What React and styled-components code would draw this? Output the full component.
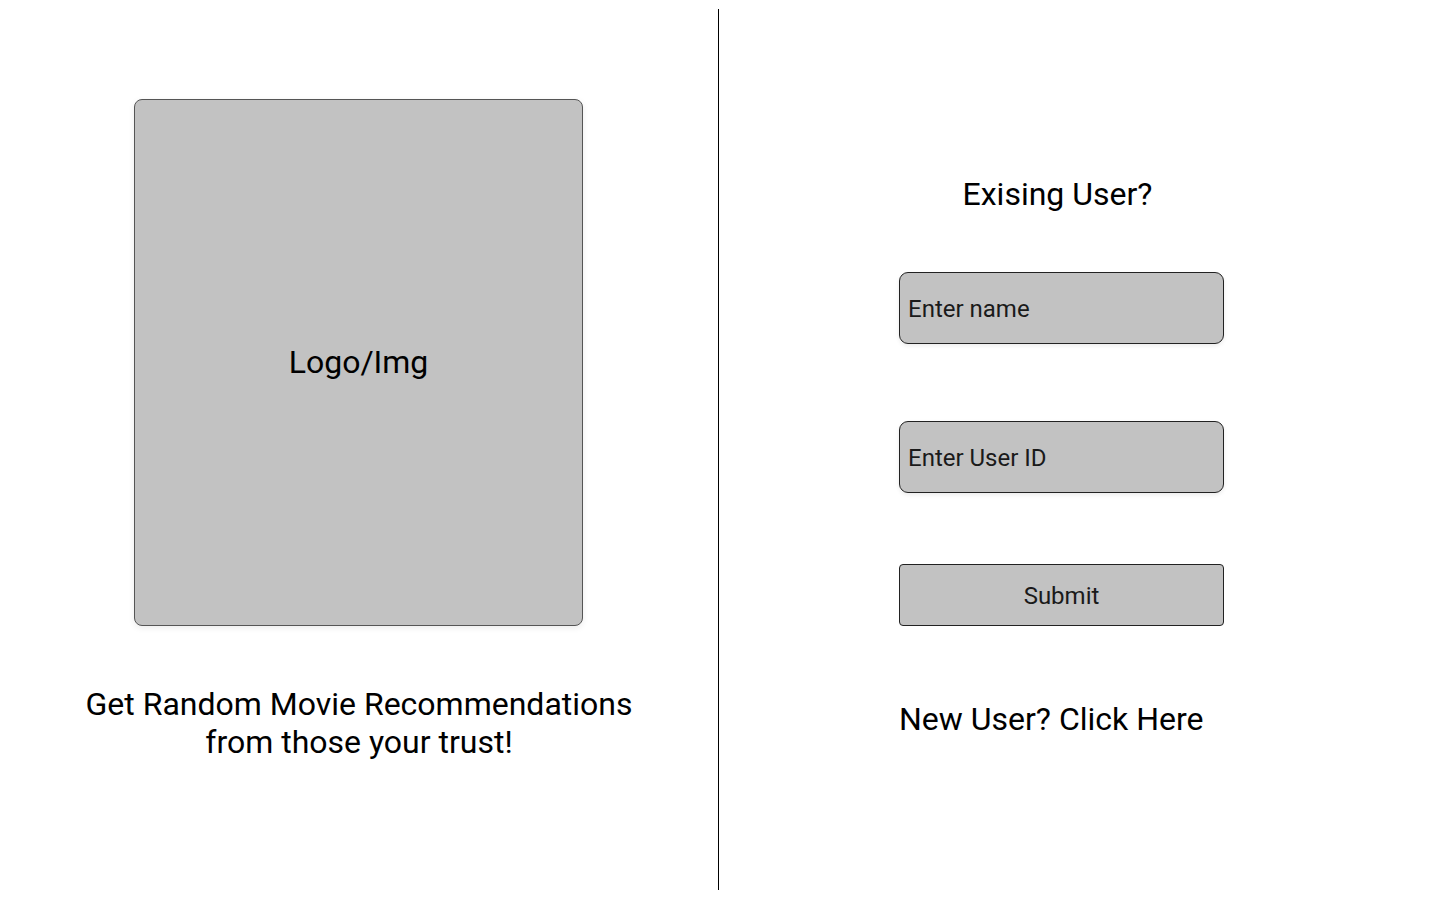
import React from "react";
import styled, { createGlobalStyle } from "styled-components";

const GlobalStyle = createGlobalStyle`
  body {
    margin: 0;
    background: #ffffff;
    font-family: "Roboto", "Liberation Sans", sans-serif;
    color: #000;
  }
`;

export default function App() {
  return (
    <>
      <GlobalStyle />
      <Page>
        <LeftPane>
          <LogoBox>Logo/Img</LogoBox>
          <Tagline>
            Get Random Movie Recommendations
            <br />
            from those your trust!
          </Tagline>
        </LeftPane>
        <RightPane>
          <Form onSubmit={(e) => e.preventDefault()}>
            <Heading>Exising User?</Heading>
            <Field placeholder="Enter name" />
            <Field placeholder="Enter User ID" $gap={77} />
            <SubmitButton type="submit">Submit</SubmitButton>
            <NewUser>New User? Click Here</NewUser>
          </Form>
        </RightPane>
      </Page>
    </>
  );
}

const Page = styled.div`
  display: flex;
  padding-top: 9px;
  height: 900px;
  box-sizing: border-box;
`;

const LeftPane = styled.div`
  width: 718px;
  height: 881px;
  border-right: 1px solid #000;
  display: flex;
  flex-direction: column;
  align-items: center;
`;

const LogoBox = styled.div`
  margin-top: 90px;
  margin-right: 1px;
  width: 449px;
  height: 527px;
  box-sizing: border-box;
  background: #c2c2c2;
  border: 1px solid #555;
  border-radius: 8px;
  box-shadow: 0 2px 6px rgba(0, 0, 0, 0.08);
  display: flex;
  align-items: center;
  justify-content: center;
  font-size: 32px;
  padding-bottom: 2px;
`;

const Tagline = styled.p`
  margin: 59px 0 0;
  font-size: 32px;
  line-height: 38px;
  text-align: center;
`;

const RightPane = styled.div`
  flex: 1;
  padding-left: 180px;
`;

const Form = styled.form`
  width: 325px;
  display: flex;
  flex-direction: column;
`;

const Heading = styled.h2`
  margin: 166px 0 0;
  font-size: 32px;
  font-weight: 400;
  line-height: 38px;
  text-align: center;
  padding-right: 8px;
`;

const Field = styled.input`
  margin-top: ${(p) => p.$gap || 59}px;
  height: 72px;
  box-sizing: border-box;
  background: #c2c2c2;
  border: 1px solid #222;
  border-radius: 9px;
  box-shadow: 0 2px 4px rgba(0, 0, 0, 0.08);
  padding: 2px 8px 0;
  font-family: "Roboto", "Liberation Sans", sans-serif;
  font-size: 24px;
  color: #000;
  outline: none;

  &::placeholder {
    color: #1a1a1a;
  }
`;

const SubmitButton = styled.button`
  margin-top: 71px;
  height: 62px;
  box-sizing: border-box;
  padding: 2px 0 0;
  background: #c2c2c2;
  border: 1px solid #222;
  border-radius: 4px;
  font-family: "Roboto", "Liberation Sans", sans-serif;
  font-size: 24px;
  color: #1a1a1a;
  cursor: pointer;
`;

const NewUser = styled.a`
  margin-top: 74px;
  font-size: 32px;
  line-height: 38px;
  color: #000;
  cursor: pointer;
`;
